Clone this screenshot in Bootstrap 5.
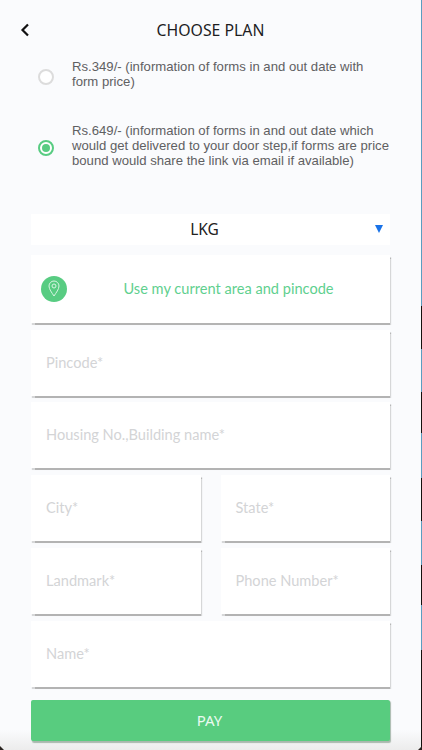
<!DOCTYPE html>
<html lang="en">
<head>
<meta charset="utf-8">
<title>Choose Plan</title>
<link rel="stylesheet" href="https://cdn.jsdelivr.net/npm/bootstrap@5.3.0/dist/css/bootstrap.min.css">
<style>
html,body{height:750px;overflow:hidden}
body{background:linear-gradient(#fafbfd 730px,#ececec 750px);font-family:"Lato","Noto Sans",sans-serif}
.screen{width:421px;height:750px;padding:0 31px}
.topbar{height:59px;padding-top:9px;position:relative;margin-left:-31px;margin-right:-31px}
.topbar h1{font-family:"Noto Sans",sans-serif;font-size:15.8px;font-weight:400;color:#1d1d1f;margin:0;line-height:42px;text-align:center;width:421px}
.backlink{position:absolute;left:20px;top:23px;line-height:0}
.plan{font-family:"Liberation Sans",sans-serif;font-size:13.15px;line-height:15px;color:#5f6062;gap:18px;padding-left:7px}
.plan-a{margin-bottom:34px}
.plan-b{margin-bottom:46px}
.dot{width:16px;height:16px;border-radius:50%;border:2px solid #dcdcdc;flex:none;background:#fff;margin-top:5px}
.dot-on{border-color:#58cc82;position:relative}
.dot-on::after{content:"";position:absolute;inset:2px;border-radius:50%;background:#58cc82}
.picker{height:31px;background:#fff;position:relative;font-family:"Noto Sans",sans-serif;font-size:15.5px;color:#222;margin-bottom:10px;width:359px;padding:1px 12px 0 0}
.caret-tri{position:absolute;right:7px;top:11px;width:0;height:0;border-left:4.5px solid transparent;border-right:4.5px solid transparent;border-top:8px solid #1a73e8}
.field{background:#fff;box-shadow:1px 1.5px 1px #b3b3b3;height:66px;margin-bottom:6.75px;color:#d3d4d6;padding-left:15px;font-size:14.6px}
.locate{height:67.5px;color:#5fd08f;font-size:14.6px;padding-left:10px;margin-bottom:7px}
.pin{width:26px;height:26px;border-radius:50%;background:#58cc82;flex:none}
.locate-text{flex:1;text-align:center}
.pair{gap:20px}
.pair .field{flex:1 1 0;width:170px}
.paybtn{background:#58cc7f;border:0;border-radius:2px;color:#eafaf0;font-size:15px;height:41px;width:359px;margin-top:13px;box-shadow:1px 1.5px 1px #a8b8ad;display:block;font-family:"Noto Sans",sans-serif;padding:0 2px 0 0}
.edge{position:fixed;top:0;right:0;width:1px;height:750px;background:linear-gradient(#5b9dc0 0 306px,#15100e 306px 349px,#5b9dc0 349px 392px,#15100e 392px 433px,#5b9dc0 433px 478px,#15100e 478px 521px,#5b9dc0 521px 565px,#15100e 565px 605px,#5b9dc0 605px 650px,#15100e 650px)}
.notch{position:fixed;bottom:0;width:4px;height:4px;background:#2a2320}
.notch-l{left:0;clip-path:polygon(0 0,100% 100%,0 100%)}
.notch-r{right:0;clip-path:polygon(100% 0,100% 100%,0 100%)}
</style>
</head>
<body>
<div class="screen">
  <div class="topbar">
    <a class="backlink" href="#" aria-label="Back"><svg width="10" height="14" viewBox="0 0 10 14"><path d="M8 1.500 2.500 7 8 12.500" fill="none" stroke="#111" stroke-width="2.2"/></svg></a>
    <h1>CHOOSE PLAN</h1>
  </div>
  <div class="plan plan-a d-flex align-items-center text-nowrap">
    <span class="dot"></span>
    <div>Rs.349/- (information of forms in and out date with<br>form price)</div>
  </div>
  <div class="plan plan-b d-flex align-items-center text-nowrap">
    <span class="dot dot-on"></span>
    <div>Rs.649/- (information of forms in and out date which<br>would get delivered to your door step,if forms are price<br>bound would share the link via email if available)</div>
  </div>
  <div class="picker d-flex align-items-center justify-content-center">LKG<span class="caret-tri"></span></div>
  <div class="field locate d-flex align-items-center">
    <span class="pin d-flex align-items-center justify-content-center">
      <svg width="12" height="17" viewBox="0 0 12 17"><path d="M6 16C3.800 12.600 1 9.300 1 6a5 5 0 0 1 10 0c0 3.300-2.800 6.600-5 10Z" fill="none" stroke="#d9f5e3" stroke-width="1"/><circle cx="6" cy="6" r="2" fill="none" stroke="#d9f5e3" stroke-width="1"/></svg>
    </span>
    <span class="locate-text">Use my current area and pincode</span>
  </div>
  <div class="field d-flex align-items-center">Pincode*</div>
  <div class="field d-flex align-items-center">Housing No.,Building name*</div>
  <div class="pair d-flex">
    <div class="field d-flex align-items-center">City*</div>
    <div class="field d-flex align-items-center">State*</div>
  </div>
  <div class="pair d-flex">
    <div class="field d-flex align-items-center">Landmark*</div>
    <div class="field d-flex align-items-center">Phone Number*</div>
  </div>
  <div class="field d-flex align-items-center">Name*</div>
  <button type="button" class="btn paybtn">PAY</button>
</div>
<div class="edge"></div>
<span class="notch notch-l"></span>
<span class="notch notch-r"></span>
</body>
</html>
